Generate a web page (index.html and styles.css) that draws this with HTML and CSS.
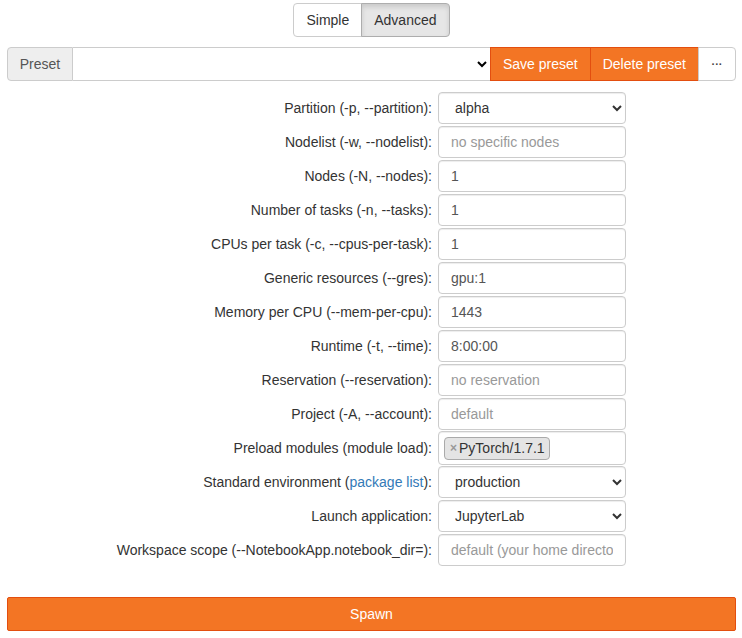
FILE: index.html
```html
<!DOCTYPE html>
<html>
<head>
<meta charset="utf-8">
<link rel="stylesheet" href="styles.css">
</head>
<body>
<div class="page">
  <div class="toggle">
    <button class="tbtn">Simple</button>
    <button class="tbtn active">Advanced</button>
  </div>

  <div class="preset">
    <span class="addon">Preset</span>
    <select class="preset-select"><option></option></select>
    <button class="obtn">Save preset</button>
    <button class="obtn">Delete preset</button>
    <button class="more">···</button>
  </div>

  <div class="form">
    <label class="lbl">Partition (-p, --partition):</label>
    <select class="ctl sel"><option>alpha</option></select>

    <label class="lbl">Nodelist (-w, --nodelist):</label>
    <input class="ctl" placeholder="no specific nodes">

    <label class="lbl">Nodes (-N, --nodes):</label>
    <input class="ctl" value="1">

    <label class="lbl">Number of tasks (-n, --tasks):</label>
    <input class="ctl" value="1">

    <label class="lbl">CPUs per task (-c, --cpus-per-task):</label>
    <input class="ctl" value="1">

    <label class="lbl">Generic resources (--gres):</label>
    <input class="ctl" value="gpu:1">

    <label class="lbl">Memory per CPU (--mem-per-cpu):</label>
    <input class="ctl" value="1443">

    <label class="lbl">Runtime (-t, --time):</label>
    <input class="ctl" value="8:00:00">

    <label class="lbl">Reservation (--reservation):</label>
    <input class="ctl" placeholder="no reservation">

    <label class="lbl">Project (-A, --account):</label>
    <input class="ctl" placeholder="default">

    <label class="lbl">Preload modules (module load):</label>
    <div class="ctl multi"><span class="tag"><span class="x">×</span>PyTorch/1.7.1</span></div>

    <label class="lbl">Standard environment (<a href="#">package list</a>):</label>
    <select class="ctl sel"><option>production</option></select>

    <label class="lbl">Launch application:</label>
    <select class="ctl sel"><option>JupyterLab</option></select>

    <label class="lbl">Workspace scope (--NotebookApp.notebook_dir=):</label>
    <input class="ctl" placeholder="default (your home directory)">
  </div>

  <button class="spawn">Spawn</button>
</div>
</body>
</html>
```

FILE: styles.css
```css
* { box-sizing: border-box; }
html, body { margin: 0; padding: 0; background: #fff; }
body {
  font-family: "Liberation Sans", Arial, sans-serif;
  font-size: 14px;
  color: #333;
}
.page {
  width: 729px;
  margin-left: 7px;
  padding-top: 3px;
}
button, input, select { font-family: inherit; font-size: 14px; }

.toggle {
  display: flex;
  justify-content: center;
}
.tbtn {
  height: 34px;
  padding: 0 12px;
  border: 1px solid #ccc;
  background: #fff;
  color: #333;
  line-height: 20px;
}
.tbtn:first-child { border-radius: 4px 0 0 4px; }
.tbtn.active {
  margin-left: -1px;
  background: #e6e6e6;
  border-color: #adadad;
  border-radius: 0 4px 4px 0;
  box-shadow: inset 0 3px 5px rgba(0,0,0,0.125);
}

.preset {
  display: flex;
  height: 34px;
  margin-top: 10px;
}
.addon {
  width: 66px;
  flex-shrink: 0;
  display: flex;
  align-items: center;
  justify-content: center;
  background: #eee;
  border: 1px solid #ccc;
  border-radius: 4px 0 0 4px;
  color: #555;
}
.preset-select {
  flex: 1;
  min-width: 0;
  height: 34px;
  border: 1px solid #ccc;
  border-left: none;
  background: #fff;
  border-radius: 0;
  padding: 0 8px;
}
.obtn {
  flex-shrink: 0;
  white-space: nowrap;
  height: 34px;
  padding: 0 12px;
  background: #f37524;
  border: 1px solid #e34e0f;
  color: #fff;
  margin-left: -1px;
}
.more {
  flex-shrink: 0;
  width: 38px;
  height: 34px;
  margin-left: -1px;
  background: #fff;
  border: 1px solid #ccc;
  border-radius: 0 4px 4px 0;
  color: #444;
  font-size: 11px;
  font-weight: bold;
  padding: 0;
}

.form {
  display: grid;
  grid-template-columns: 425px 188px;
  column-gap: 6px;
  row-gap: 2px;
  margin-top: 11px;
}
.lbl {
  text-align: right;
  display: flex;
  align-items: center;
  justify-content: flex-end;
  height: 32px;
  color: #333;
  white-space: nowrap;
}
.lbl a { color: #337ab7; text-decoration: none; }
.ctl {
  height: 32px;
  width: 188px;
  border: 1px solid #ccc;
  border-radius: 4px;
  background: #fff;
  padding: 0 12px;
  color: #555;
  box-shadow: inset 0 1px 1px rgba(0,0,0,0.075);
}
input.ctl::placeholder { color: #999; }
.sel { padding: 0 8px 0 12px; color: #333; }
.multi {
  height: 34px;
  display: flex;
  align-items: center;
  padding: 0 5px;
  margin-top: -1px;
  margin-bottom: -1px;
}
.tag {
  display: inline-flex;
  align-items: center;
  height: 23px;
  padding: 0 4px 0 5px;
  background: #e4e4e4;
  border: 1px solid #aaa;
  border-radius: 4px;
  color: #333;
}
.x { color: #999; font-size: 12px; font-weight: bold; margin-right: 2px; }

.spawn {
  display: block;
  width: 729px;
  height: 34px;
  margin-top: 31px;
  background: #f37524;
  border: 1px solid #e34e0f;
  border-radius: 2px;
  color: #fff;
}
```
